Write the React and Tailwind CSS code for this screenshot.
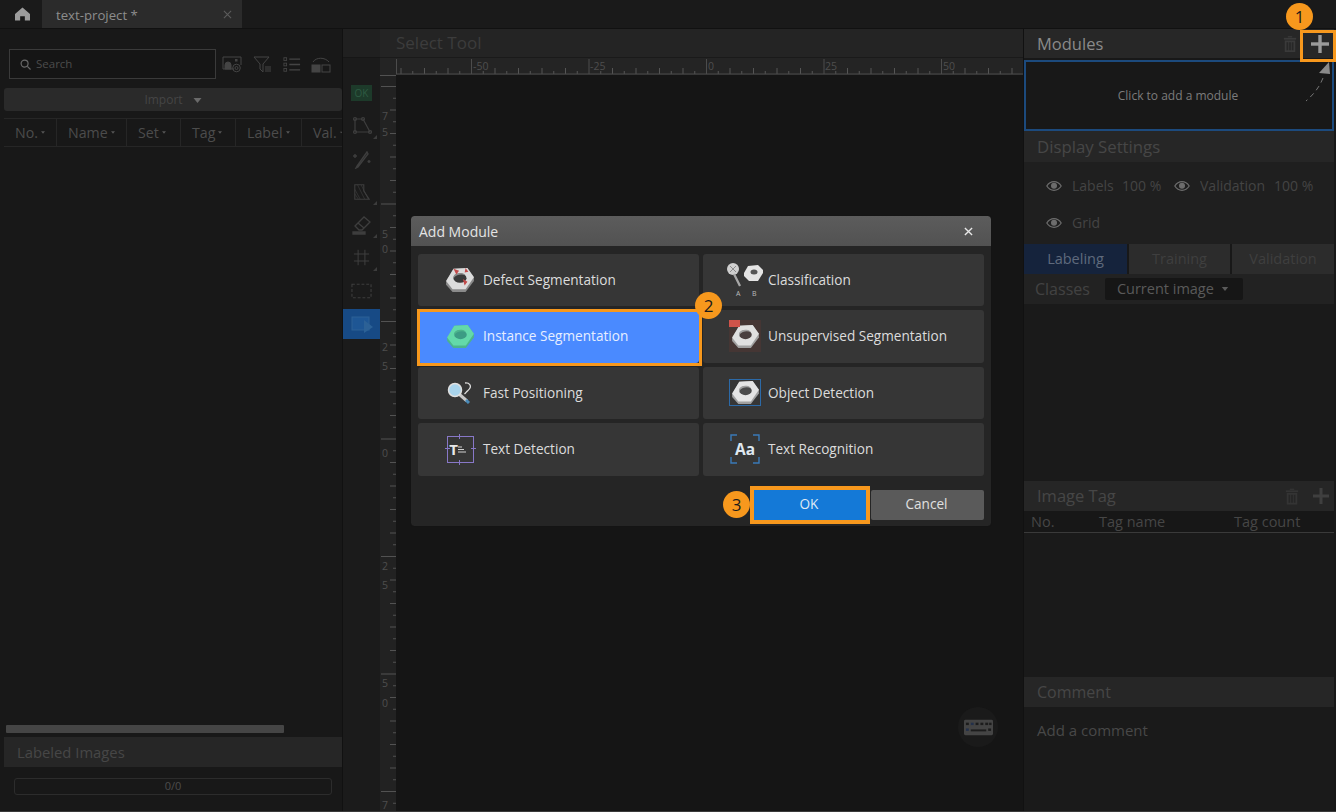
import React from "react";

const Nut = ({ face = "#e4e4e4", side = "#9a9a9a", hole = "#3a3a3a", className = "", children }) => (
  <svg viewBox="0 0 32 28" className={className}>
    <path d="M1 16 L9 2 L24 1 L31 11 L31 15 L22 27 L8 27 L1 19 Z" fill={side} />
    <path d="M1 15 L9 2 L24 1 L31 11 L22 24 L8 24 Z" fill={face} />
    <ellipse cx="16" cy="12" rx="7" ry="5" fill={hole} />
    <path d="M9.500 14 A7 5 0 0 1 22 9 A8 5 0 0 0 9.500 14 Z" fill={side} />
    {children}
  </svg>
);

const Trash = ({ className = "" }) => (
  <svg viewBox="0 0 16 18" className={className} fill="currentColor">
    <rect x="5.500" y="0" width="5" height="1.500" />
    <rect x="1" y="2" width="14" height="2" />
    <path d="M2 5h12v13H2z M4 7v9h2V7z M7 7v9h2V7z M10 7v9h2V7z" fillRule="evenodd" />
  </svg>
);

const Plus = ({ className = "" }) => (
  <svg viewBox="0 0 18 18" className={className} fill="currentColor">
    <rect x="7.300" y="0" width="3.400" height="18" />
    <rect x="0" y="7.300" width="18" height="3.400" />
  </svg>
);

const Eye = () => (
  <svg viewBox="0 0 16 10" className="w-[16px] h-[10px] shrink-0 text-[#6d6d6d]" fill="none" stroke="currentColor" strokeWidth="1.200">
    <path d="M.8 5C3 1.600 5.500.7 8 .7s5 .9 7.200 4.300C13 8.400 10.500 9.300 8 9.300S3 8.400.8 5z" />
    <circle cx="8" cy="4.800" r="2.400" fill="currentColor" />
  </svg>
);

const Caret = ({ className = "" }) => (
  <svg viewBox="0 0 8 5" className={className} fill="currentColor"><path d="M0 0h8L4 5z" /></svg>
);

const Badge = ({ n, className }) => (
  <div className={`absolute w-[27px] h-[27px] rounded-full bg-[#f7981d] text-[#1a1a1a] text-[17px] flex items-center justify-center ${className}`}>{n}</div>
);

const Card = ({ icon, label, selected }) => (
  <div className={`relative h-[52.500px] rounded-[3px] flex items-center ${selected ? "bg-[#4a8aff] text-[#e6eeff]" : "bg-[#363636] text-[#dcdcdc]"}`}>
    <div className="w-[65px] h-full flex items-center justify-center pl-[19px] shrink-0">{icon}</div>
    <span className="text-[13.600px]">{label}</span>
    {selected && <div className="absolute -left-px -top-px -right-[3px] -bottom-[3.500px] border-[3.500px] border-[#f7981d]" />}
  </div>
);

const HorizontalRuler = () => {
  const ticks = [];
  for (let k = -6; k < 47; k++) {
    const x = 75.5 + k * 11.75;
    const major = k % 10 === 0;
    const tall = k % 2 === 0;
    ticks.push(<line key={k} x1={x} x2={x} y1={major ? 1 : tall ? 10 : 13} y2="16" stroke={major ? "#4c4c4c" : "#555555"} />);
  }
  return (
    <svg viewBox="0 0 627 17" className="w-[627px] h-[17px] block">
      <line x1="0.500" x2="0.500" y1="1" y2="16" stroke="#4c4c4c" />
      {ticks}
      <line x1="0" x2="627" y1="16" y2="16" stroke="#4a4a4a" />
      <g fill="#4e4e4e" fontSize="10.500" fontFamily="Open Sans">
        <text x="77" y="12">-50</text>
        <text x="194" y="12">-25</text>
        <text x="312" y="12">0</text>
        <text x="429" y="12">25</text>
        <text x="547" y="12">50</text>
      </g>
    </svg>
  );
};

const VerticalRuler = () => {
  const ticks = [];
  for (let i = 0; i < 63; i++) {
    const y = 11.5 + i * 11.75;
    const major = i % 10 === 0;
    const long = i % 2 === 0;
    ticks.push(<line key={i} x1={major ? 1 : long ? 10 : 13} x2="16" y1={y} y2={y} stroke="#525252" />);
  }
  const nums = [["7", 45], ["5", 61], ["5", 163], ["0", 178], ["2", 276], ["5", 295], ["0", 382], ["2", 495], ["5", 514], ["5", 612], ["0", 632], ["7", 734]];
  return (
    <svg viewBox="0 0 16 737" className="w-[16px] h-[737px] block">
      {ticks}
      <line x1="0" x2="16" y1="0.500" y2="0.500" stroke="#525252" />
      <g fill="#4e4e4e" fontSize="10.500" fontFamily="Open Sans">
        {nums.map(([t, y], i) => <text key={i} x="2" y={y}>{t}</text>)}
      </g>
    </svg>
  );
};

const Tool = ({ children, tri, active }) => (
  <div className={`relative w-[37px] flex items-center justify-center ${active ? "h-[30px] bg-[#174a85] mt-[2px]" : "h-[33px]"}`}>
    {children}
    {tri && <div className="absolute right-[3px] bottom-[3px] w-0 h-0 border-l-[4px] border-l-transparent border-b-[4px] border-b-[#3c3c3c]" />}
  </div>
);

const SectionHead = ({ children, right, className = "" }) => (
  <div className={`bg-[#262626] flex items-center justify-between pl-[13px] text-[#464646] shrink-0 ${className}`}>
    <span>{children}</span>
    {right}
  </div>
);

const columns = [["No.", 53], ["Name", 70], ["Set", 54], ["Tag", 55], ["Label", 66], ["Val.", 40]];

export default function App() {
  return (
    <div className="relative w-[1336px] h-[812px] overflow-hidden bg-[#181818] font-['Open_Sans','Noto_Sans',sans-serif] flex flex-col">
      {/* Top bar */}
      <div className="h-[29px] shrink-0 flex bg-[#1a1a1a] border-b border-[#111111]">
        <div className="w-[42px] flex items-center justify-center pl-[3px]">
          <svg viewBox="0 0 16 14" className="w-[15px] h-[14px] text-[#9c9c9c]" fill="currentColor">
            <path d="M8 0 L16 7 V14 H10.500 V9.500 H5.500 V14 H0 V7 Z" />
          </svg>
        </div>
        <div className="w-[200px] bg-[#2b2b2b] flex items-center justify-between pl-[14px] pr-[10px] text-[#8d8d8d] text-[13.200px]">
          <span className="pt-[3px]">text-project *</span>
          <svg viewBox="0 0 10 10" className="w-[9px] h-[9px] text-[#5c5c5c]" stroke="currentColor" strokeWidth="1.200"><path d="M1 1l8 8M9 1l-8 8" /></svg>
        </div>
      </div>

      <div className="flex-1 flex min-h-0">
        {/* Left panel */}
        <div className="w-[343px] shrink-0 pl-[4px] flex flex-col border-r border-[#111111]">
          <div className="h-[20px]" />
          <div className="flex items-center h-[30px] pl-[5px]">
            <div className="w-[207px] h-[30px] border border-[#3a3a3a] bg-[#151515] flex items-center pl-[10px] gap-[5px] text-[#4c4c4c] text-[11.500px]">
              <svg viewBox="0 0 12 12" className="w-[11px] h-[11px] text-[#6a6a6a]" fill="none" stroke="currentColor" strokeWidth="1.300"><circle cx="5" cy="5" r="3.800" /><path d="M8 8l3.500 3.500" /></svg>
              Search
            </div>
            <div className="flex items-center ml-[6px] text-[#444444]">
              <svg viewBox="0 0 20 17" className="w-[20px] h-[17px]" fill="none" stroke="currentColor" strokeWidth="1">
                <path d="M12 13H1V1h18v8" />
                <path d="M3 13V9a3 3 0 0 1 6 0v4z" fill="currentColor" />
                <circle cx="14.500" cy="12" r="3.800" /><circle cx="14.500" cy="12" r="1.500" />
                <rect x="13" y="3" width="2.500" height="2.500" fill="currentColor" stroke="none" />
              </svg>
              <svg viewBox="0 0 20 17" className="w-[20px] h-[17px] ml-[11px]" fill="none" stroke="currentColor" strokeWidth="1">
                <path d="M1 1h15L10 8v8L7 13V8z" />
                <path d="M12 11h6M12 13h6M12 15h6" />
              </svg>
              <svg viewBox="0 0 20 17" className="w-[18px] h-[17px] ml-[10px]" fill="none" stroke="currentColor" strokeWidth="1.500">
                <rect x="1" y="1" width="3" height="3" strokeWidth="1" /><rect x="1" y="7" width="3" height="3" strokeWidth="1" /><rect x="1" y="13" width="3" height="3" strokeWidth="1" />
                <path d="M7 2.500h12M7 8.500h12M7 14.500h12" />
              </svg>
              <svg viewBox="0 0 20 17" className="w-[20px] h-[17px] ml-[10px]" fill="none" stroke="currentColor" strokeWidth="1">
                <rect x="1" y="9" width="8" height="7" fill="currentColor" /><rect x="11" y="9" width="8" height="7" />
                <path d="M2 6C5 1 14 1 18 6" />
              </svg>
            </div>
          </div>
          <div className="h-[9px]" />
          <div className="h-[23px] rounded-[3px] bg-[#2a2a2a] flex items-center justify-center gap-[10px] text-[#454545] text-[12px] pt-px">
            Import
            <Caret className="w-[9px] h-[5px] text-[#6a6a6a]" />
          </div>
          <div className="h-[7px]" />
          <div className="h-[29px] flex border-y border-[#262626] overflow-hidden">
            {columns.map(([c, w], i) => (
              <div key={c} style={{ width: w }} className={`shrink-0 flex items-center pl-[11px] gap-[3px] text-[#4c4c4c] text-[14.200px] ${i < 5 ? "border-r border-[#262626]" : ""}`}>
                {c}
                <Caret className="w-[4px] h-[3px] text-[#555555]" />
              </div>
            ))}
          </div>
          <div className="flex-1" />
          <div className="h-[8px] w-[278px] ml-[2px] rounded-[1px] bg-[#454545]" />
          <div className="h-[4px]" />
          <SectionHead className="h-[30px] text-[14.800px]">Labeled Images</SectionHead>
          <div className="h-[11px]" />
          <div className="mx-[10px] h-[17px] rounded-[3px] border border-[#2c2c2c] flex items-center justify-center text-[11px] text-[#4c4c4c]">0/0</div>
          <div className="h-[16px]" />
        </div>

        {/* Tool column */}
        <div className="w-[37px] shrink-0 bg-[#1b1b1b] flex flex-col">
          <div className="h-[29px] shrink-0 bg-[#202020] border-b border-[#161616]" />
          <div className="h-[27px]" />
          <div className="flex justify-center h-[18px] mb-[6px]">
            <div className="w-[21px] h-[16px] bg-[#1d3a2a] text-[#2d5a42] text-[10px] flex items-center justify-center">OK</div>
          </div>
          <div className="flex flex-col items-center text-[#3e3e3e]">
            <Tool tri>
              <svg viewBox="0 0 20 20" className="w-[20px] h-[20px]" fill="none" stroke="currentColor" strokeWidth="1.200"><path d="M3 3h8l7 13H3z" /><circle cx="3" cy="3" r="1.500" /><circle cx="11" cy="3" r="1.500" /><circle cx="18" cy="16" r="1.500" /><circle cx="3" cy="16" r="1.500" /></svg>
            </Tool>
            <Tool>
              <svg viewBox="0 0 20 20" className="w-[20px] h-[20px]" fill="none" stroke="currentColor" strokeWidth="1.400"><path d="M15 3L5 17l-1 2 2-1L16 5zM3 5v4M1 7h4M17 11v3M15.500 12.500h3" /></svg>
            </Tool>
            <Tool tri>
              <svg viewBox="0 0 20 20" className="w-[18px] h-[18px]" fill="none" stroke="currentColor" strokeWidth="1.200"><path d="M2 2h10v7l6 9H2z" /><path d="M2 7l6 11M2 12l4 6M5 2l8 16M9 2l8 16" strokeWidth=".7" /></svg>
            </Tool>
            <Tool tri>
              <svg viewBox="0 0 20 20" className="w-[20px] h-[20px]" fill="none" stroke="currentColor" strokeWidth="1.300"><path d="M3 11l9-9 6 5-8 8H7z" /><path d="M6 8l6 5" /><path d="M1 17h12v2H1z" fill="currentColor" /></svg>
            </Tool>
            <Tool tri>
              <svg viewBox="0 0 20 20" className="w-[17px] h-[17px]" fill="none" stroke="currentColor" strokeWidth="1.200"><path d="M6 1v18M14 1v18M1 6h18M1 14h18" /></svg>
            </Tool>
            <Tool>
              <svg viewBox="0 0 22 16" className="w-[21px] h-[16px]" fill="none" stroke="currentColor" strokeWidth="1.100" strokeDasharray="3 2"><rect x="1" y="1" width="20" height="14" /></svg>
            </Tool>
            <Tool active>
              <svg viewBox="0 0 24 20" className="w-[24px] h-[20px] text-[#2c6196]" fill="none" stroke="currentColor" strokeWidth="1"><rect x="2" y="3" width="17" height="13" fill="#1e5694" /><path d="M14 6l9 7-9 6z" fill="currentColor" stroke="none" /></svg>
            </Tool>
          </div>
        </div>

        {/* Center */}
        <div className="w-[643px] shrink-0 flex flex-col">
          <div className="h-[29px] shrink-0 bg-[#242424] flex items-center pl-[16px] text-[17px] text-[#3c3c3c] border-b border-[#1a1a1a]">Select Tool</div>
          <div className="h-[17px] shrink-0 flex bg-[#242424]">
            <div className="w-[16px] shrink-0" />
            <HorizontalRuler />
          </div>
          <div className="flex-1 flex min-h-0">
            <div className="w-[16px] shrink-0 bg-[#222222] overflow-hidden"><VerticalRuler /></div>
            <div className="flex-1 bg-[#151515] relative">
              <div className="absolute left-[562px] top-[632px] w-[40px] h-[40px] rounded-full bg-[#1a1a1a] flex items-center justify-center">
                <svg viewBox="0 0 30 16" className="w-[29px] h-[17px]">
                  <rect width="30" height="16" rx="1.500" fill="#444444" />
                  <g fill="#1c1c1c">
                    <rect x="2" y="3" width="3" height="2.500" /><rect x="7" y="3" width="3" height="2.500" fill="#23304a" /><rect x="12" y="3" width="3" height="2.500" /><rect x="17" y="3" width="3" height="2.500" /><rect x="22" y="3" width="3" height="2.500" /><rect x="26" y="3" width="2.500" height="2.500" />
                    <rect x="2" y="9" width="3" height="2.500" fill="#23304a" /><rect x="7" y="10" width="16" height="2" /><rect x="25" y="9" width="3" height="2.500" />
                  </g>
                </svg>
              </div>
            </div>
          </div>
        </div>

        {/* Right panel */}
        <div className="flex-1 flex flex-col border-l border-[#111111] pr-[2px]">
          <div className="h-[29px] shrink-0 bg-[#272727] flex items-center justify-between pl-[13px] text-[16.500px] text-[#8a8a8a]">
            <span className="pt-[2px]">Modules</span>
            <div className="flex items-center gap-[14px] pr-[5px]">
              <Trash className="w-[14px] h-[16px] text-[#3a3a3a]" />
              <Plus className="w-[18px] h-[18px] text-[#9a9a9a]" />
            </div>
          </div>
          <div className="h-[2px] shrink-0" />
          <div className="h-[71px] shrink-0 border-2 border-[#1c4a7d] bg-[#181818] relative flex items-center justify-center text-[12px] text-[#7c7c7c] pr-[2px]">
            Click to add a module
            <svg viewBox="0 0 34 44" className="absolute right-0 top-0 w-[34px] h-[44px]">
              <path d="M31 0 L21 11 L32 12 Z" fill="#8a8a8a" />
              <path d="M25 16 C 21 26, 15 33, 8 39" fill="none" stroke="#777777" strokeWidth="1" strokeDasharray="5 4" />
            </svg>
          </div>
          <SectionHead className="h-[31px] text-[16.800px]">Display Settings</SectionHead>
          <div className="h-[82px] shrink-0 bg-[#1f1f1f] text-[14px] text-[#444444] pl-[22px] pt-[15px]">
            <div className="flex items-center h-[17px]">
              <Eye /><span className="ml-[10px] w-[50px] shrink-0">Labels</span><span className="w-[52px] shrink-0">100 %</span>
              <Eye /><span className="ml-[10px] w-[67px] shrink-0 overflow-hidden whitespace-nowrap">Validation</span><span className="ml-[7px] whitespace-nowrap">100 %</span>
            </div>
            <div className="flex items-center h-[17px] mt-[20px]">
              <Eye /><span className="ml-[10px]">Grid</span>
            </div>
          </div>
          <div className="h-[30px] shrink-0 flex gap-[2px] text-[14.500px] text-[#3f3f3f]">
            <div className="w-[103px] bg-[#15233c] text-[#5f6a7c] flex items-center justify-center">Labeling</div>
            <div className="w-[101px] bg-[#2c2c2c] flex items-center justify-center">Training</div>
            <div className="flex-1 bg-[#2c2c2c] flex items-center justify-center">Validation</div>
          </div>
          <div className="h-[30px] shrink-0 bg-[#222222] flex items-center pl-[11px] text-[16px] text-[#424242]">
            Classes
            <div className="ml-[15px] w-[138px] h-[22px] rounded-[2px] bg-[#161616] text-[#5a5a5a] text-[14.500px] flex items-center pl-[12px] gap-[7px]">
              Current image
              <Caret className="w-[8px] h-[4px] text-[#5a5a5a]" />
            </div>
          </div>
          <div className="h-[177px] shrink-0 bg-[#1a1a1a]" />
          <SectionHead className="h-[30px] pr-[5px] text-[16.500px]" right={
            <div className="flex items-center gap-[14px]">
              <Trash className="w-[14px] h-[17px] text-[#343434]" />
              <Plus className="w-[16px] h-[16px] text-[#3f3f3f]" />
            </div>
          }>Image Tag</SectionHead>
          <div className="h-[22px] shrink-0 bg-[#171717] border-b border-[#3a3a3a] flex items-center text-[14.500px] text-[#464646]">
            <span className="ml-[7px] w-[68px]">No.</span>
            <span className="w-[135px]">Tag name</span>
            <span>Tag count</span>
          </div>
          <div className="h-[144px] shrink-0 bg-[#1a1a1a]" />
          <SectionHead className="h-[30px] text-[16px]">Comment</SectionHead>
          <div className="flex-1 bg-[#1a1a1a] pl-[13px] pt-[12px] text-[15px] text-[#484848]">Add a comment</div>
        </div>
      </div>
      <div className="h-px shrink-0 bg-[#3a3a3a]" />

      {/* Modal */}
      <div className="absolute left-[411px] top-[216px] w-[580px] h-[310px] rounded-[3px] bg-[#252525] outline outline-[#141414] flex flex-col">
        <div className="h-[30px] shrink-0 rounded-t-[3px] bg-gradient-to-b from-[#5c5c5c] to-[#525252] flex items-center justify-between pl-[8px] pr-[18px] text-[14px] text-[#e4e4e4]">
          Add Module
          <svg viewBox="0 0 10 10" className="w-[9px] h-[9px] text-[#e8e8e8]" stroke="currentColor" strokeWidth="1.500"><path d="M1 1l8 8M9 1l-8 8" /></svg>
        </div>
        <div className="grid grid-cols-[281px_281px] gap-[4px] pl-[7px] pt-[7.500px]">
          <Card label="Defect Segmentation" icon={
            <Nut className="w-[30px] h-[26px] shrink-0" face="#dcdcdc" side="#8a8a8a">
              <path d="M9 2l6 2-3 4zM21 20l-2-7 5 3z" fill="#c24a4a" />
              <path d="M22 1l3 4-4 1z" fill="#c24a4a" />
            </Nut>
          } />
          <Card label="Classification" icon={
            <svg viewBox="0 0 38 36" className="w-[38px] h-[36px] shrink-0">
              <circle cx="7" cy="7" r="6" fill="#cfcfcf" />
              <path d="M4 4l6 6M10 4l-6 6" stroke="#8a8a8a" strokeWidth="1" />
              <path d="M8 12l6 12" stroke="#a8a8a8" strokeWidth="2.200" />
              <path d="M18 11 L22 4 L32 3 L37 8 L37 11 L32 19 L23 19 L18 14 Z" fill="#e4e4e4" />
              <ellipse cx="28" cy="10" rx="3.500" ry="2.500" fill="#555555" />
              <text x="10" y="34" fontSize="7" fill="#bbbbbb" fontFamily="Open Sans">A</text>
              <text x="26" y="34" fontSize="7" fill="#bbbbbb" fontFamily="Open Sans">B</text>
            </svg>
          } />
          <Card selected label="Instance Segmentation" icon={<Nut className="w-[29px] h-[25px] shrink-0" face="#63d9a9" side="#4cb48c" hole="#3c9c84" />} />
          <Card label="Unsupervised Segmentation" icon={
            <div className="relative w-[32px] h-[32px] shrink-0 bg-[#453634] flex items-center justify-center">
              <Nut className="w-[29px] h-[25px]" face="#e0e0e0" side="#a0a0a0" hole="#4a4040" />
              <div className="absolute left-0 top-0 w-[11px] h-[7px] bg-[#d0534a]" />
            </div>
          } />
          <Card label="Fast Positioning" icon={
            <svg viewBox="0 0 26 22" className="w-[26px] h-[22px] shrink-0">
              <path d="M12 12l8 7" stroke="#c8c8c8" strokeWidth="3" />
              <path d="M19 18l3 3" stroke="#4a8ab8" strokeWidth="3" />
              <circle cx="8" cy="8" r="6.500" fill="#a9d4ec" stroke="#e0e0e0" strokeWidth="1.500" />
              <path d="M18 1c5-.5 6 3 5 5-1 2-3 3-3.500 4M19.500 10l-2 2" fill="none" stroke="#dcdcdc" strokeWidth="1.300" />
            </svg>
          } />
          <Card label="Object Detection" icon={
            <div className="w-[32px] h-[27px] shrink-0 border border-[#2c6aa8] flex items-center justify-center">
              <Nut className="w-[29px] h-[25px]" face="#e4e4e4" side="#a0a0a0" hole="#4a4a4a" />
            </div>
          } />
          <Card label="Text Detection" icon={
            <div className="relative w-[27px] h-[27px] shrink-0 border-[1.500px] border-[#8878c8] flex items-center justify-center">
              <span className="text-[15px] leading-none font-bold text-[#e8e8e8] -ml-[5px]">T</span>
              <svg viewBox="0 0 9 8" className="w-[9px] h-[8px] -ml-px mt-[2px]" stroke="#d0d0d0" strokeWidth="1.200"><path d="M1 1h4M1 3.500h6M1 6h8" /></svg>
              <div className="absolute -top-[3px] left-[11px] w-[1.500px] h-[5px] bg-[#8878c8]" />
              <div className="absolute -bottom-[3px] left-[11px] w-[1.500px] h-[5px] bg-[#8878c8]" />
              <div className="absolute -left-[3px] top-[11px] h-[1.500px] w-[5px] bg-[#8878c8]" />
              <div className="absolute -right-[3px] top-[11px] h-[1.500px] w-[5px] bg-[#8878c8]" />
            </div>
          } />
          <Card label="Text Recognition" icon={
            <div className="relative w-[30px] h-[30px] shrink-0 flex items-center justify-center text-[#dfe8f0] font-bold text-[15.500px]">
              Aa
              <svg viewBox="0 0 30 30" className="absolute inset-0 w-[30px] h-[30px]" fill="none" stroke="#3a7ab8" strokeWidth="1.400">
                <path d="M1 7V1h6M23 1h6v6M29 23v6h-6M7 29H1v-6" />
              </svg>
            </div>
          } />
        </div>
        <div className="flex justify-end gap-[5px] pr-[7px] mt-[14px]">
          <div className="w-[112px] h-[30px] bg-[#1479d7] outline-[4px] outline-[#f7981d] flex items-center justify-center pr-[2px] text-[13.600px] text-[#dfeaf5]">OK</div>
          <div className="w-[113px] h-[30px] bg-[#5a5a5a] rounded-[2px] flex items-center justify-center pr-[2px] text-[13.600px] text-[#e0e0e0]">Cancel</div>
        </div>
      </div>

      {/* Annotations */}
      <div className="absolute left-[1300px] top-[30px] w-[36px] h-[32px] border-[3px] border-[#f7981d]" />
      <Badge n="1" className="left-[1286px] top-[3px]" />
      <Badge n="2" className="left-[695px] top-[292px]" />
      <Badge n="3" className="left-[723px] top-[491px]" />
    </div>
  );
}
